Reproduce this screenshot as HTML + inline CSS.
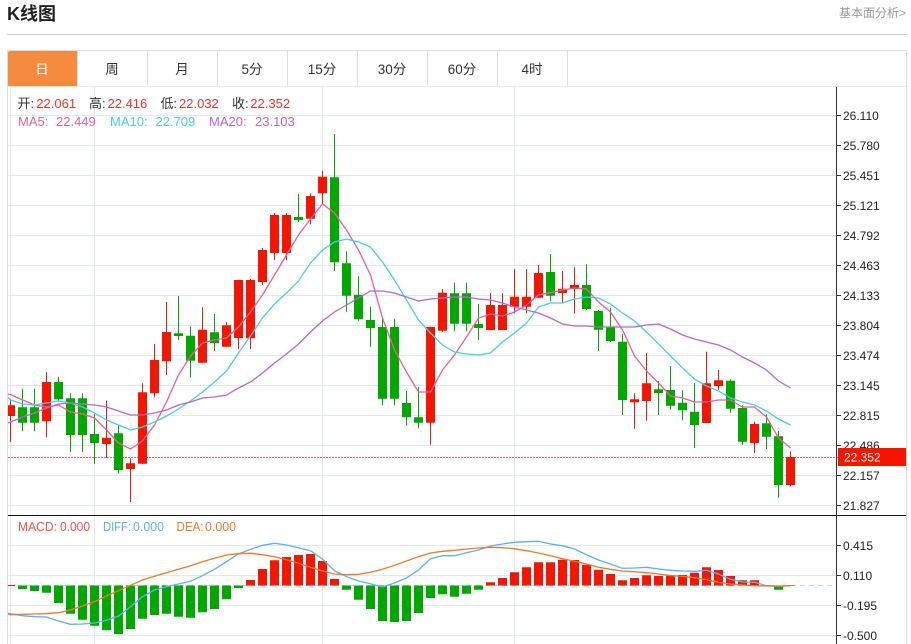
<!DOCTYPE html>
<html lang="zh"><head><meta charset="utf-8"><title>K线图</title>
<style>
html,body{margin:0;padding:0;background:#fff;width:911px;height:644px;overflow:hidden}
svg{display:block}
text{font-family:"Liberation Sans","Noto Sans CJK SC",sans-serif}
.ax{font-size:12px;fill:#222}
.lg{font-size:13px}
.tab{font-size:13.5px;fill:#333;text-anchor:middle}
</style></head><body>
<svg width="911" height="644" viewBox="0 0 911 644" xmlns="http://www.w3.org/2000/svg">
<text x="7" y="20" font-size="18" font-weight="700" fill="#222">K线图</text>
<text x="906" y="17" font-size="12" fill="#999" text-anchor="end">基本面分析&gt;</text>
<path d="M7 34.5H907" stroke="#d0d0d0"/>
<path d="M7 50.5H907M7.5 50V644M906.5 50V644" stroke="#ddd" fill="none"/>
<path d="M8 86.5H906" stroke="#e8e8e8"/>
<path d="M8 53a2 2 0 0 1 2-2H77V86H8z" fill="#f58b3f"/>
<path d="M77.5 51V86M147.5 51V86M217.5 51V86M287.5 51V86M357.5 51V86M427.5 51V86M497.5 51V86M567.5 51V86" stroke="#ddd"/>
<text class="tab" x="42" y="74" style="fill:#fff">日</text>
<text class="tab" x="112" y="74">周</text>
<text class="tab" x="182" y="74">月</text>
<text class="tab" x="252" y="74">5分</text>
<text class="tab" x="322" y="74">15分</text>
<text class="tab" x="392" y="74">30分</text>
<text class="tab" x="462" y="74">60分</text>
<text class="tab" x="532" y="74">4时</text>

<!-- grid -->
<path stroke="#e0e8f0" fill="none" d="M8 115.5H836M8 145.5H836M8 175.5H836M8 205.5H836M8 235.5H836M8 265.5H836M8 295.5H836M8 325.5H836M8 355.5H836M8 385.5H836M8 415.5H836M8 445.5H836M8 475.5H836M8 505.5H836M8 545.5H836M8 575.5H836M8 605.5H836M8 635.5H836M10.5 87V644M94.5 87V644M322.5 87V644M514.5 87V644"/>

<path d="M8 457.5H838" stroke="#f4605a" stroke-dasharray="2 1"/>
<path d="M8 585.5H834" stroke="#b4ddf0" stroke-dasharray="5 4"/>

<!-- red candles -->
<path fill="none" stroke="#f51500" d="M10.5 399V442M46.5 372.3V437.3M106.5 400.7V458M130.5 458.3V502M142.5 383.3V464M154.5 344V397.3M166.5 302V375M202.5 307.3V362.7M226.5 322.3V346.7M238.5 280V349M250.5 279V349M262.5 248V285M274.5 213V260M286.5 213V260M310.5 193.3V224.3M322.5 170.7V205M430.5 326.7V444.7M442.5 289V331.7M490.5 293.3V330M502.5 293.3V330M514.5 269V313.3M526.5 269V313.3M538.5 265V298M562.5 271V302.7M574.5 267.3V313.7M634.5 393.3V428.7M646.5 353.3V420.7M706.5 351.7V423M718.5 370V390M754.5 421.7V453M790.5 451.3V486.3"/>
<path fill="#f51500" d="M8 405.3H15V416H8zM42 382h9V421.3h-9zM102 437.7h9V444h-9zM126 463.3h9V469h-9zM138 392.3h9V463.7h-9zM150 360h9V393.3h-9zM162 332h9V361.3h-9zM198 329.7h9V362.7h-9zM222 325.3h9V346.7h-9zM234 280h9V338h-9zM246 280h9V338.3h-9zM258 250h9V282h-9zM270 215h9V253h-9zM282 215h9V253h-9zM306 196h9V218.7h-9zM318 176.7h9V193.3h-9zM426 327h9V422.7h-9zM438 292.7h9V330.7h-9zM486 305h9V330h-9zM498 305h9V330h-9zM510 296.7h9V306.7h-9zM522 296.7h9V306.7h-9zM534 273h9V297.7h-9zM558 288.7h9V293h-9zM570 285h9V289h-9zM630 399.3h9V402.3h-9zM642 383.3h9V401h-9zM702 383.3h9V423h-9zM714 380.3h9V386h-9zM750 424h9V443h-9zM786 457h9V485h-9z"/>
<!-- green candles -->
<path fill="none" stroke="#00a800" d="M22.5 388.7V431.3M34.5 388.7V431.3M58.5 376.7V401.7M70.5 393.3V452M82.5 393.3V452M94.5 414V463.7M118.5 425V473.7M178.5 296V340M190.5 326.3V377.7M214.5 314V351M298.5 194V222M334.5 134V271M346.5 251.3V311.7M358.5 276.3V320.7M370.5 306.7V346.7M382.5 319V405.3M394.5 318.7V405.3M406.5 391V425.7M418.5 386.7V428.3M454.5 282.7V331.3M466.5 282.7V331.3M478.5 304V340M550.5 254V301M586.5 264.3V310M598.5 310V351M610.5 308V342M622.5 334V415M658.5 381V415M670.5 366V409.7M682.5 390.3V420.3M694.5 383.3V448M730.5 379.3V412.7M742.5 405.3V445M766.5 414.3V449M778.5 431V497.7"/>
<path fill="#00a800" d="M18 407.3h9V422.7h-9zM30 407.3h9V422.7h-9zM54 382h9V399.3h-9zM66 398.3h9V435h-9zM78 398.3h9V435h-9zM90 434h9V443h-9zM114 433.3h9V470h-9zM174 333.3h9V336h-9zM186 335.7h9V360.7h-9zM210 332.3h9V343.3h-9zM294 217h9V220h-9zM330 177.3h9V262.3h-9zM342 263.3h9V295.7h-9zM354 294.7h9V319.3h-9zM366 320h9V328h-9zM378 327h9V398.7h-9zM390 327h9V398.7h-9zM402 403h9V417.3h-9zM414 417.3h9V422.7h-9zM450 293.3h9V323.7h-9zM462 293.3h9V323.7h-9zM474 324h9V328h-9zM546 272h9V295.7h-9zM582 285h9V309h-9zM594 311h9V329.7h-9zM606 327.3h9V341h-9zM618 341.7h9V400h-9zM654 389.3h9V393h-9zM666 390h9V405.7h-9zM678 402.7h9V410.3h-9zM690 411.7h9V425h-9zM726 380.7h9V408.7h-9zM738 408h9V441.7h-9zM762 423.3h9V436.7h-9zM774 436.3h9V485h-9z"/>

<!-- MA lines -->
<polyline fill="none" stroke="#ec5f93" stroke-width="1.3" points="8,394 10.5,394.5 22.5,400 34.5,405 46.5,407 58.5,405 70.5,412 82.5,414 94.5,418 106.5,430 118.5,443 130.5,449 142.5,441 154.5,425 166.5,402 178.5,375 190.5,356 202.5,343 214.5,340 226.5,338 238.5,327 250.5,312 262.5,295 274.5,275 286.5,255 298.5,235 310.5,219 322.5,204 334.5,213 346.5,230 358.5,250 370.5,275 382.5,318 394.5,350 406.5,372 418.5,392 430.5,392 442.5,370 454.5,355 466.5,337 478.5,318 490.5,314 502.5,316 514.5,312 526.5,305 538.5,295 550.5,292.7 562.5,290 574.5,288 586.5,289 598.5,302 610.5,312 622.5,330 634.5,356 646.5,371 658.5,383 670.5,396 682.5,398 694.5,402 706.5,402 718.5,400 730.5,400 742.5,407 754.5,407 766.5,417 778.5,438 790.5,448"/>
<polyline fill="none" stroke="#45cfe3" stroke-width="1.3" points="8,397 10.5,400 22.5,404 34.5,405 46.5,403 58.5,401 70.5,403 82.5,407 94.5,413 106.5,420 118.5,425 130.5,430 142.5,427 154.5,422 166.5,416 178.5,409 190.5,401 202.5,392 214.5,382 226.5,371 238.5,353 250.5,336 262.5,318 274.5,304 286.5,293 298.5,281 310.5,263 322.5,250 334.5,242 346.5,239 358.5,242 370.5,247 382.5,262 394.5,280 406.5,300 418.5,320 430.5,333 442.5,345 454.5,352 466.5,354 478.5,355 490.5,353 502.5,342 514.5,333 526.5,323 538.5,307 550.5,303 562.5,303 574.5,299 586.5,297 598.5,298 610.5,304 622.5,313 634.5,321 646.5,332 658.5,344 670.5,356 682.5,368 694.5,379 706.5,386 718.5,391 730.5,398 742.5,402 754.5,405 766.5,411 778.5,419 790.5,425"/>
<polyline fill="none" stroke="#b966cf" stroke-width="1.3" points="8,423 10.5,422 22.5,417 34.5,413 46.5,408 58.5,404 70.5,403 82.5,404 94.5,405 106.5,407 118.5,411 130.5,415 142.5,415 154.5,413 166.5,410 178.5,405 190.5,402 202.5,398 214.5,397 226.5,395 238.5,388 250.5,382 262.5,373 274.5,363 286.5,354 298.5,344 310.5,332 322.5,321 334.5,312 346.5,305 358.5,298 370.5,291 382.5,291 394.5,293 406.5,297 418.5,301 430.5,299 442.5,298 454.5,297 466.5,297 478.5,299 490.5,300 502.5,303 514.5,307 526.5,310 538.5,313 550.5,318 562.5,324 574.5,326 586.5,326 598.5,327 610.5,327 622.5,327 634.5,327 646.5,325 658.5,324 670.5,329 682.5,335 694.5,339 706.5,342 718.5,345 730.5,350 742.5,357 754.5,363 766.5,370 778.5,381 790.5,388"/>

<!-- MACD bars -->
<path fill="#f51500" d="M8 585H15V586H8zM246 585.5h9V580h-9zM258 585.5h9V569h-9zM270 585.5h9V560.3h-9zM282 585.5h9V557h-9zM294 585.5h9V555h-9zM306 585.5h9V554h-9zM318 585.5h9V561h-9zM330 585.5h9V579h-9zM486 585.5h9V582.3h-9zM498 585.5h9V578h-9zM510 585.5h9V572.3h-9zM522 585.5h9V567.3h-9zM534 585.5h9V562.3h-9zM546 585.5h9V562.3h-9zM558 585.5h9V559.7h-9zM570 585.5h9V560h-9zM582 585.5h9V564.7h-9zM594 585.5h9V569.7h-9zM606 585.5h9V574h-9zM618 585.5h9V580.3h-9zM630 585.5h9V578h-9zM642 585.5h9V575.3h-9zM654 585.5h9V576h-9zM666 585.5h9V575.3h-9zM678 585.5h9V575h-9zM690 585.5h9V572.7h-9zM702 585.5h9V567.3h-9zM714 585.5h9V570h-9zM726 585.5h9V576h-9zM738 585.5h9V580.3h-9zM750 585.5h9V580.3h-9zM762 585.5h9V585h-9z"/>
<path fill="#00a800" d="M18 585.5h9V589h-9zM30 585.5h9V591h-9zM42 585.5h9V592.7h-9zM54 585.5h9V603h-9zM66 585.5h9V613.7h-9zM78 585.5h9V619.7h-9zM90 585.5h9V625.7h-9zM102 585.5h9V630.3h-9zM114 585.5h9V634h-9zM126 585.5h9V629h-9zM138 585.5h9V618.7h-9zM150 585.5h9V615h-9zM162 585.5h9V613.7h-9zM174 585.5h9V616.7h-9zM186 585.5h9V617.7h-9zM198 585.5h9V612.3h-9zM210 585.5h9V609h-9zM222 585.5h9V599.3h-9zM234 585.5h9V588h-9zM342 585.5h9V589.7h-9zM354 585.5h9V599.7h-9zM366 585.5h9V609h-9zM378 585.5h9V621h-9zM390 585.5h9V622h-9zM402 585.5h9V621h-9zM414 585.5h9V613h-9zM426 585.5h9V598h-9zM438 585.5h9V594.3h-9zM450 585.5h9V596.7h-9zM462 585.5h9V593.7h-9zM474 585.5h9V589.7h-9zM774 585.5h9V589.7h-9zM786 585.5h9V586h-9z"/>

<polyline fill="none" stroke="#5cb0f5" stroke-width="1.3" points="8,613.3 22.5,615.7 34.5,616.7 46.5,617 58.5,621 70.5,624.3 82.5,624 94.5,623 106.5,620.3 118.5,616 130.5,606.7 142.5,596.7 154.5,590 166.5,586.7 178.5,584 190.5,581.3 202.5,575.7 214.5,569.3 226.5,561.7 238.5,554 250.5,549.3 262.5,545.3 274.5,543.3 286.5,545 298.5,547.7 310.5,550.7 322.5,559 334.5,570.7 346.5,576.7 358.5,581 370.5,583.7 382.5,587 394.5,583 406.5,578 418.5,570 430.5,558.7 442.5,555.7 454.5,555.7 466.5,552.7 478.5,550 490.5,546 502.5,544 514.5,542.3 526.5,541.7 538.5,541.3 550.5,544 562.5,545.7 574.5,549 586.5,554.7 598.5,560 610.5,564 622.5,568.3 634.5,568 646.5,567.3 658.5,569 670.5,570.3 682.5,571 694.5,571.3 706.5,570.3 718.5,574 730.5,579.3 742.5,582 754.5,582.3 766.5,585.7 778.5,586.3 790.5,585.7"/>
<polyline fill="none" stroke="#f5772a" stroke-width="1.3" points="8,614 10.5,614.7 22.5,614.3 34.5,614 46.5,613.7 58.5,612.7 70.5,610 82.5,606 94.5,601.7 106.5,596 118.5,590.7 130.5,585.3 142.5,580 154.5,576.3 166.5,572.7 178.5,569.3 190.5,565.7 202.5,561.7 214.5,558.3 226.5,555 238.5,553.7 250.5,553.3 262.5,554.7 274.5,556.7 286.5,559.7 298.5,563.3 310.5,567.3 322.5,571 334.5,574 346.5,574.7 358.5,574.3 370.5,572.3 382.5,569.3 394.5,565.3 406.5,561 418.5,556.7 430.5,553 442.5,551.3 454.5,550.3 466.5,549 478.5,548 490.5,547.3 502.5,547.7 514.5,548.7 526.5,550.7 538.5,553 550.5,555.7 562.5,558.7 574.5,561.3 586.5,564 598.5,567.3 610.5,569.3 622.5,571 634.5,571.7 646.5,572.7 658.5,574 670.5,575.7 682.5,576.3 694.5,577.7 706.5,579.7 718.5,582.3 730.5,584 742.5,585 754.5,585.7 766.5,586 778.5,586 790.5,585.7"/>

<!-- legend -->
<text class="lg" x="17.5" y="108" fill="#333">开:</text><text class="lg" x="36.3" y="108" fill="#f5302a">22.061</text>
<text class="lg" x="89" y="108" fill="#333">高:</text><text class="lg" x="107.5" y="108" fill="#f5302a">22.416</text>
<text class="lg" x="160.5" y="108" fill="#333">低:</text><text class="lg" x="179" y="108" fill="#f5302a">22.032</text>
<text class="lg" x="232" y="108" fill="#333">收:</text><text class="lg" x="250.3" y="108" fill="#f5302a">22.352</text>
<text class="lg" x="18" y="126" fill="#ec5f93">MA5:</text><text class="lg" x="56" y="126" fill="#ec5f93">22.449</text>
<text class="lg" x="110" y="126" fill="#45cfe3">MA10:</text><text class="lg" x="155.5" y="126" fill="#45cfe3">22.709</text>
<text class="lg" x="209" y="126" fill="#b966cf">MA20:</text><text class="lg" x="255" y="126" fill="#b966cf">23.103</text>
<text class="lg" x="18" y="531" fill="#f5504a" textLength="39" lengthAdjust="spacingAndGlyphs">MACD:</text><text class="lg" x="60" y="531" fill="#f5504a" textLength="30" lengthAdjust="spacingAndGlyphs">0.000</text>
<text class="lg" x="103" y="531" fill="#5cb0f5" textLength="28" lengthAdjust="spacingAndGlyphs">DIFF:</text><text class="lg" x="133" y="531" fill="#5cb0f5" textLength="31" lengthAdjust="spacingAndGlyphs">0.000</text>
<text class="lg" x="176.500" y="531" fill="#f5772a" textLength="27" lengthAdjust="spacingAndGlyphs">DEA:</text><text class="lg" x="205" y="531" fill="#f5772a" textLength="31" lengthAdjust="spacingAndGlyphs">0.000</text>

<!-- axis -->
<path d="M8 515.5H906" stroke="#111"/>
<path d="M836.500 87V644" stroke="#333"/>
<path stroke="#333" d="M837 115.500h4M837 145.500h4M837 175.500h4M837 205.500h4M837 235.500h4M837 265.500h4M837 295.500h4M837 325.500h4M837 355.500h4M837 385.500h4M837 415.500h4M837 445.500h4M837 475.500h4M837 505.500h4M837 545.500h4M837 575.500h4M837 605.500h4M837 635.500h4"/>
<g class="ax">
<text class="ax" x="843" y="120">26.110</text>
<text class="ax" x="843" y="150">25.780</text>
<text class="ax" x="843" y="180">25.451</text>
<text class="ax" x="843" y="210">25.121</text>
<text class="ax" x="843" y="240">24.792</text>
<text class="ax" x="843" y="270">24.463</text>
<text class="ax" x="843" y="300">24.133</text>
<text class="ax" x="843" y="330">23.804</text>
<text class="ax" x="843" y="360">23.474</text>
<text class="ax" x="843" y="390">23.145</text>
<text class="ax" x="843" y="420">22.815</text>
<text class="ax" x="843" y="450">22.486</text>
<text class="ax" x="843" y="480">22.157</text>
<text class="ax" x="843" y="510">21.827</text>
<text class="ax" x="843" y="550">0.415</text>
<text class="ax" x="843" y="580">0.110</text>
<text class="ax" x="843" y="610">-0.195</text>
<text class="ax" x="843" y="640">-0.500</text>
</g>
<rect x="838" y="448" width="68" height="18" fill="#f51500"/>
<text x="844" y="461.500" font-size="12" fill="#fff">22.352</text>
</svg>
</body></html>
